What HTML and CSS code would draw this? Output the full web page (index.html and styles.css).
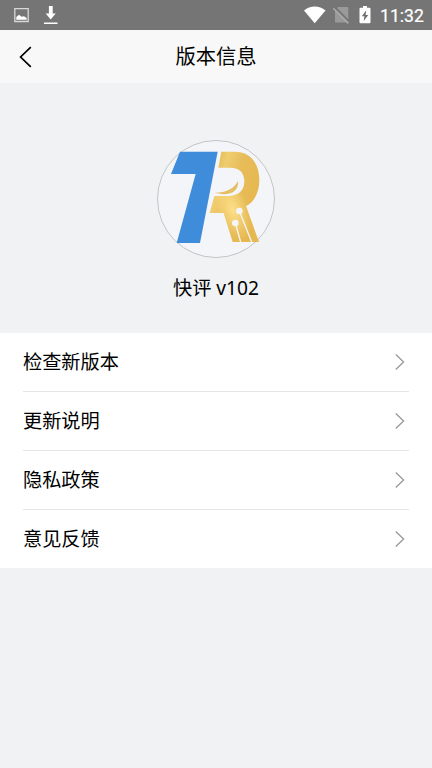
FILE: index.html
```html
<!DOCTYPE html>
<html lang="zh-CN">
<head>
<meta charset="utf-8">
<title>版本信息</title>
<link rel="stylesheet" href="styles.css">
</head>
<body>
<div class="status">
  <svg class="status-left" width="70" height="30" viewBox="0 0 70 30">
    <path d="M14.800 8.700H28.200V21.500H14.800Z" fill="none" stroke="#d8d8d8" stroke-width="1.300"/>
    <path d="M16.300 19.800V17L19 14.800L21.700 16.800L24 16.300L26.700 18V19.800Z" fill="#fff"/>
    <path d="M48.900 6H52.700V13.500H55.700L50.700 19.500L45.700 13.500H48.900ZM44 22.500H57.500V24.100H44Z" fill="#fff"/>
  </svg>
  <div class="status-right">
    <svg width="70" height="30" viewBox="0 0 70 30">
      <path d="M2 10.400C8 5.300 17.500 5.300 23.500 10.400L12.700 23.300Z" fill="#fff"/>
      <path d="M36 7H45Q46.300 7 46.300 8.300V22.500H33V10Z" fill="#9a9a9a"/>
      <path d="M32.800 7.200L48 22.400" stroke="#757575" stroke-width="2"/>
      <path d="M31.200 8.200L46.400 23.400" stroke="#aaa" stroke-width="1.500"/>
      <path d="M61 6H65V7.700H67.500Q68.500 7.700 68.500 8.700V22.300Q68.500 23.300 67.500 23.300H58.500Q57.500 23.300 57.500 22.300V8.700Q57.500 7.700 58.500 7.700H61Z" fill="#fff"/>
      <path d="M64.300 10.300L59.800 16.200H62.400L61.700 21L66.300 15H63.600Z" fill="#707070"/>
    </svg>
    <span class="clock">11:32</span>
  </div>
</div>
<header class="header">
  <svg class="back" width="14" height="22" viewBox="0 0 14 22"><path d="M12.800 1.200L2.600 11L12.800 20.800" fill="none" stroke="#000" stroke-width="1.700"/></svg>
  <h1>版本信息</h1>
</header>
<section class="about">
  <svg class="logo" width="132" height="132" viewBox="0 0 396 396">
    <defs>
      <linearGradient id="gold" gradientUnits="userSpaceOnUse" x1="190" y1="90" x2="330" y2="135">
        <stop offset="0" stop-color="#e3b64d"/><stop offset=".25" stop-color="#f0cd70"/><stop offset=".55" stop-color="#e7bd5a"/><stop offset="1" stop-color="#e6b851"/>
      </linearGradient>
      <radialGradient id="shine" gradientUnits="userSpaceOnUse" cx="0" cy="0" r="1" gradientTransform="translate(248 232) rotate(70) scale(95 48)">
        <stop offset="0" stop-color="#fde08a"/><stop offset="1" stop-color="#fde08a" stop-opacity="0"/>
      </radialGradient>
      <path id="letter" d="M214 59H253C300 59 328 91 328 145C328 180 313 210 288 222L327 330H248L221 243H179L193 192H240C268 190 283 174 283 148C283 122 268 107 241 107H205Z"/>
    </defs>
    <circle cx="198" cy="201" r="175.500" fill="#f3f5f8" stroke="#c4c4c6" stroke-width="3"/>
    <path d="M90 59H203L150 333H80L137 126H63Z" fill="#3f8cdb"/>
    <use href="#letter" fill="url(#gold)"/>
    <use href="#letter" fill="url(#shine)"/>
    <path d="M193 182C225 183 251 172 264 147C267 170 251 187 220 187Z" fill="#e6bd60"/>
    <g fill="#f3f5f8" stroke="#f3f5f8" stroke-width="4">
      <path d="M268 237L305 330M256 273L272 330" fill="none"/>
      <circle cx="268" cy="237" r="8"/><circle cx="256" cy="273" r="8"/>
    </g>
  </svg>
  <div class="version">快评 v102</div>
</section>
<nav class="menu">
  <a class="row"><span>检查新版本</span><svg width="10" height="16" viewBox="0 0 10 16"><path d="M.8 .5L8.600 8L.8 15.500"/></svg></a>
  <a class="row"><span>更新说明</span><svg width="10" height="16" viewBox="0 0 10 16"><path d="M.8 .5L8.600 8L.8 15.500"/></svg></a>
  <a class="row"><span>隐私政策</span><svg width="10" height="16" viewBox="0 0 10 16"><path d="M.8 .5L8.600 8L.8 15.500"/></svg></a>
  <a class="row"><span>意见反馈</span><svg width="10" height="16" viewBox="0 0 10 16"><path d="M.8 .5L8.600 8L.8 15.500"/></svg></a>
</nav>
</body>
</html>
```
FILE: styles.css
```css
* { box-sizing: border-box; }
body {
  margin: 0;
  min-height: 768px;
  background: #f0f2f4;
  color: #000;
  font-family: "Noto Sans", "Noto Sans CJK SC", sans-serif;
}
svg { display: block; flex: none; }
.status {
  height: 30px;
  background: #757575;
  display: flex;
  justify-content: space-between;
}
.status-right { display: flex; padding-right: 8px; }
.status-right svg { margin-right: 8px; }
.clock {
  width: 44px;
  font: 400 17.600px/32px Roboto, sans-serif;
  color: #fff;
  -webkit-text-stroke: .2px #fff;
  white-space: nowrap;
}
.header {
  height: 53px;
  background: #f8f8f8;
  display: grid;
  grid-template-columns: 56px 1fr 56px;
  align-items: center;
}
.back { margin-left: 18px; }
.header h1 {
  margin: 0;
  text-align: center;
  font-size: 20.300px;
  line-height: 50px;
  padding-bottom: 1px;
  font-weight: 400;
}
.about {
  height: 250px;
  padding-top: 49px;
  display: flex;
  flex-direction: column;
  align-items: center;
}
.version {
  margin-top: 9px;
  font-size: 19.200px;
  line-height: 30px;
}
.menu {
  background: #fff;
  padding: 0 23px;
}
.row {
  height: 59px;
  display: flex;
  align-items: center;
  justify-content: space-between;
  padding-right: 4px;
  font-size: 19.200px;
  border-bottom: 1px solid #e5e5e5;
}
.row span { padding-bottom: 2px; }
.row:last-child { height: 58px; border-bottom: 0; }
.row path { fill: none; stroke: #999; stroke-width: 1.300; }
```
